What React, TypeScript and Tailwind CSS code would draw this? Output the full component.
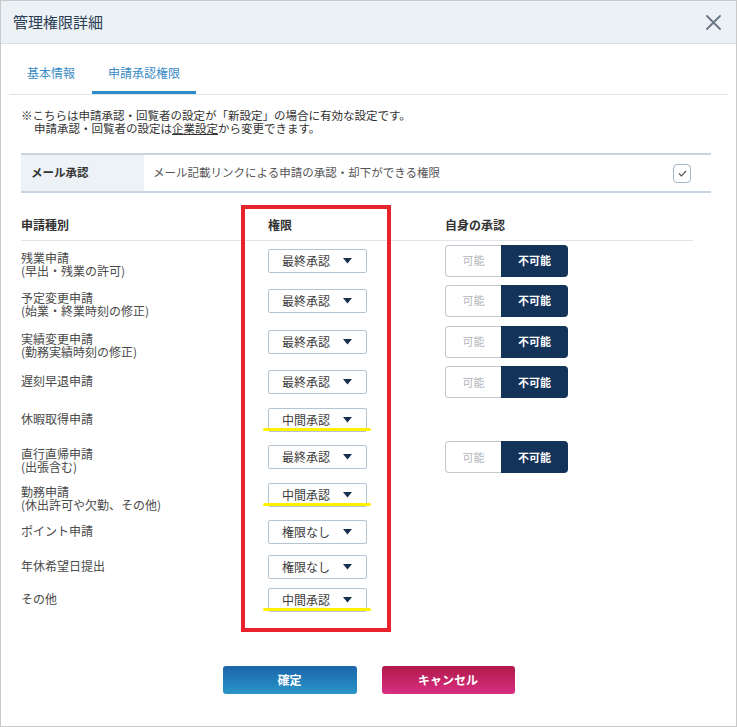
import React from "react";

type Row = {
  l1: string;
  l2?: string;
  sel: string;
  toggle: boolean;
  h: string;
  yl: boolean;
};

const rows: Row[] = [
  { l1: "残業申請", l2: "(早出・残業の許可)", sel: "最終承認", toggle: true, h: "h-[39px]", yl: false },
  { l1: "予定変更申請", l2: "(始業・終業時刻の修正)", sel: "最終承認", toggle: true, h: "h-[41px]", yl: false },
  { l1: "実績変更申請", l2: "(勤務実績時刻の修正)", sel: "最終承認", toggle: true, h: "h-[41px]", yl: false },
  { l1: "遅刻早退申請", sel: "最終承認", toggle: true, h: "h-[40px]", yl: false },
  { l1: "休暇取得申請", sel: "中間承認", toggle: false, h: "h-[36px]", yl: true },
  { l1: "直行直帰申請", l2: "(出張含む)", sel: "最終承認", toggle: true, h: "h-[38px]", yl: false },
  { l1: "勤務申請", l2: "(休出許可や欠勤、その他)", sel: "中間承認", toggle: false, h: "h-[38px]", yl: true },
  { l1: "ポイント申請", sel: "権限なし", toggle: false, h: "h-[36px]", yl: false },
  { l1: "年休希望日提出", sel: "権限なし", toggle: false, h: "h-[34px]", yl: false },
  { l1: "その他", sel: "中間承認", toggle: false, h: "h-[32px]", yl: true },
];

const font = { fontFamily: '"Noto Sans CJK JP", "Noto Sans", sans-serif' };

function Select({ value, yl }: { value: string; yl: boolean }) {
  return (
    <div className="relative w-[99px] h-[24px]">
      <div className="w-full h-full border border-[#b4c4d3] rounded-[2px] bg-white flex items-center pl-[13px] pr-[14px] justify-between">
        <span className="text-[12px] leading-[14px] text-[#3c3c3c]">{value}</span>
        <svg width="9" height="6" viewBox="0 0 9 6">
          <path d="M0 0 L9 0 L4.5 5.5 Z" fill="#17304f" />
        </svg>
      </div>
      {yl && (
        <div className="absolute left-[-5px] top-[20px] w-[108px] h-[3px] rounded-full bg-[#fff000]" />
      )}
    </div>
  );
}

function Toggle() {
  return (
    <div className="flex h-[32px] w-[123px]">
      <div className="w-[56px] h-full border border-[#c3c8ce] border-r-0 rounded-l-[4px] bg-white flex items-center justify-center text-[11px] text-[#b0b4b9]">
        可能
      </div>
      <div className="w-[67px] h-full rounded-r-[4px] bg-[#133358] flex items-center justify-center text-[11px] font-bold text-white">
        不可能
      </div>
    </div>
  );
}

export default function App() {
  return (
    <div
      className="w-[737px] h-[727px] border border-[#c9c9c9] bg-white flex flex-col overflow-hidden"
      style={font}
    >
      {/* header */}
      <div className="h-[43px] shrink-0 bg-[#ecf1f6] border-b border-[#d9e0e7] flex items-center justify-between pl-[12px] pr-[15px]">
        <span className="text-[15px] leading-[18px] text-[#2b3d52]">管理権限詳細</span>
        <svg width="15" height="15" viewBox="0 0 15 15">
          <path d="M1 1 L14 14 M14 1 L1 14" stroke="#6a7684" strokeWidth="1.8" strokeLinecap="round" />
        </svg>
      </div>

      {/* tabs */}
      <div className="mx-[8px] flex border-b border-[#dfe5eb]">
        <div className="pl-[18px] pr-[17px] pt-[22px] pb-[11px] border-b-[3px] border-transparent text-[12px] leading-[14px] text-[#3b8cc6]">
          基本情報
        </div>
        <div className="px-[16px] pt-[22px] pb-[11px] border-b-[3px] border-[#2f8bc9] text-[12px] leading-[14px] text-[#3b8cc6]">
          申請承認権限
        </div>
      </div>

      {/* note */}
      <div className="pt-[14px] pl-[20px] text-[11.5px] leading-[13px] text-[#333]">
        <div>※こちらは申請承認・回覧者の設定が「新設定」の場合に有効な設定です。</div>
        <div className="pl-[13px]">
          申請承認・回覧者の設定は<span className="underline">企業設定</span>から変更できます。
        </div>
      </div>

      {/* mail approval */}
      <div className="mt-[18px] ml-[20px] w-[690px] h-[40px] border-y-2 border-[#c8d5e1] flex">
        <div className="w-[123px] bg-[#edf2f7] flex items-center pl-[10px] text-[11.5px] font-bold text-[#333]">
          メール承認
        </div>
        <div className="flex-1 flex items-center pl-[9px] text-[11.5px] text-[#555]">
          メール記載リンクによる申請の承認・却下ができる権限
        </div>
        <div className="flex items-center pr-[20px]">
          <div className="w-[18px] h-[19px] border-[1.5px] border-[#a3b7c9] rounded-[4px] flex items-center justify-center">
            <svg width="9" height="7" viewBox="0 0 9 7">
              <path d="M1 3.5 L3.5 6 L8 1" stroke="#555" strokeWidth="1.2" fill="none" />
            </svg>
          </div>
        </div>
      </div>

      {/* permissions table */}
      <div className="relative mt-[19px] ml-[20px] w-[672px]">
        <div className="grid grid-cols-[247px_177px_1fr] h-[29px] items-center border-b border-[#dfe5eb] text-[12px] font-bold text-[#333] pb-[2px]">
          <div>申請種別</div>
          <div>権限</div>
          <div>自身の承認</div>
        </div>
        {rows.map((r, i) => (
          <div key={i} className={`grid grid-cols-[247px_177px_1fr] items-center ${r.h}`}>
            <div
              className={
                r.l2
                  ? "text-[12px] leading-[13px] text-[#4a4a4a] pt-[6px]"
                  : "text-[12px] leading-[13px] text-[#4a4a4a] pb-[3px]"
              }
            >
              <div>{r.l1}</div>
              {r.l2 && <div>{r.l2}</div>}
            </div>
            <div>
              <Select value={r.sel} yl={r.yl} />
            </div>
            <div>{r.toggle && <Toggle />}</div>
          </div>
        ))}
        <div className="absolute left-[220px] top-[-7px] w-[150px] h-[427px] border-[4px] border-[#e8232b] pointer-events-none" />
      </div>

      {/* buttons */}
      <div className="mt-[50px] flex justify-center gap-[25px]">
        <button className="w-[134px] h-[28px] rounded-[3px] bg-gradient-to-b from-[#1d64aa] to-[#2a96c7] text-white text-[12px] font-bold">
          確定
        </button>
        <button className="w-[133px] h-[28px] rounded-[3px] bg-gradient-to-b from-[#b0184a] to-[#d92f82] text-white text-[12px] font-bold">
          キャンセル
        </button>
      </div>
    </div>
  );
}
